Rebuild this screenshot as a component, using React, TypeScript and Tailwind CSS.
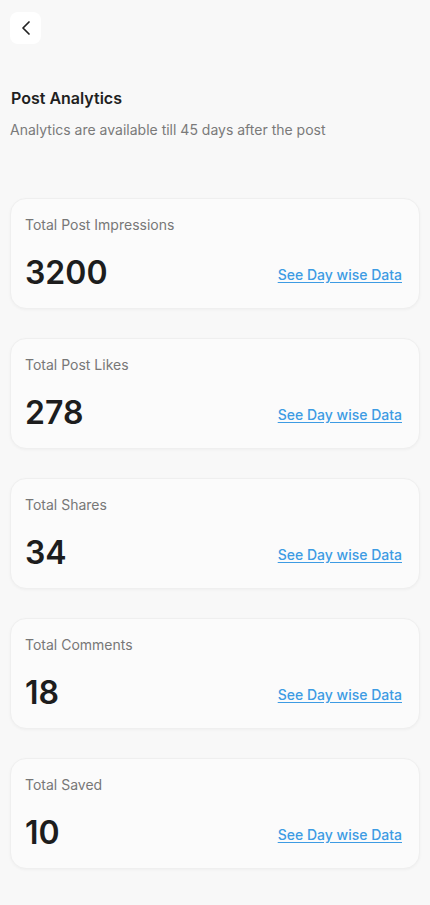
import { ChevronLeft } from "lucide-react";

const stats = [
  { label: "Total Post Impressions", value: "3200" },
  { label: "Total Post Likes", value: "278" },
  { label: "Total Shares", value: "34" },
  { label: "Total Comments", value: "18" },
  { label: "Total Saved", value: "10" },
];

function StatCard({ label, value }: { label: string; value: string }) {
  return (
    <div className="h-[111px] rounded-2xl border border-[#efefef] bg-[#fbfbfb] px-[14px] pt-[16px] shadow-[0_1px_3px_rgba(0,0,0,0.04)]">
      <div className="text-[14px] leading-5 text-[#777777]">{label}</div>
      <div className="mt-[18px] flex items-center justify-between pr-[3px]">
        <span className="text-[32px] font-semibold leading-10 text-[#1d1d1d]">
          {value}
        </span>
        <a
          href="#"
          className="mt-1 text-[14px] font-medium leading-5 text-[#3d9be3] underline underline-offset-2"
        >
          See Day wise Data
        </a>
      </div>
    </div>
  );
}

export default function App() {
  return (
    <div
      className="min-h-[905px] w-full bg-[#f8f8f8] px-[10px] pt-3 pb-8"
      style={{ fontFamily: "Inter, 'Noto Sans', sans-serif" }}
    >
      {/* Back button */}
      <button className="flex h-[32px] w-[31px] items-center justify-center rounded-lg bg-white">
        <ChevronLeft className="h-6 w-6 text-[#222]" strokeWidth={1.75} />
      </button>

      {/* Heading */}
      <h1 className="mt-[42px] pl-px text-[16px] font-semibold leading-6 text-[#1f1f1f]">
        Post Analytics
      </h1>
      <p className="mt-[10px] text-[14px] leading-5 text-[#7a7a7a]">
        Analytics are available till 45 days after the post
      </p>

      {/* Cards */}
      <div className="mt-[58px] flex flex-col gap-[29px]">
        {stats.map((s) => (
          <StatCard key={s.label} label={s.label} value={s.value} />
        ))}
      </div>
    </div>
  );
}
